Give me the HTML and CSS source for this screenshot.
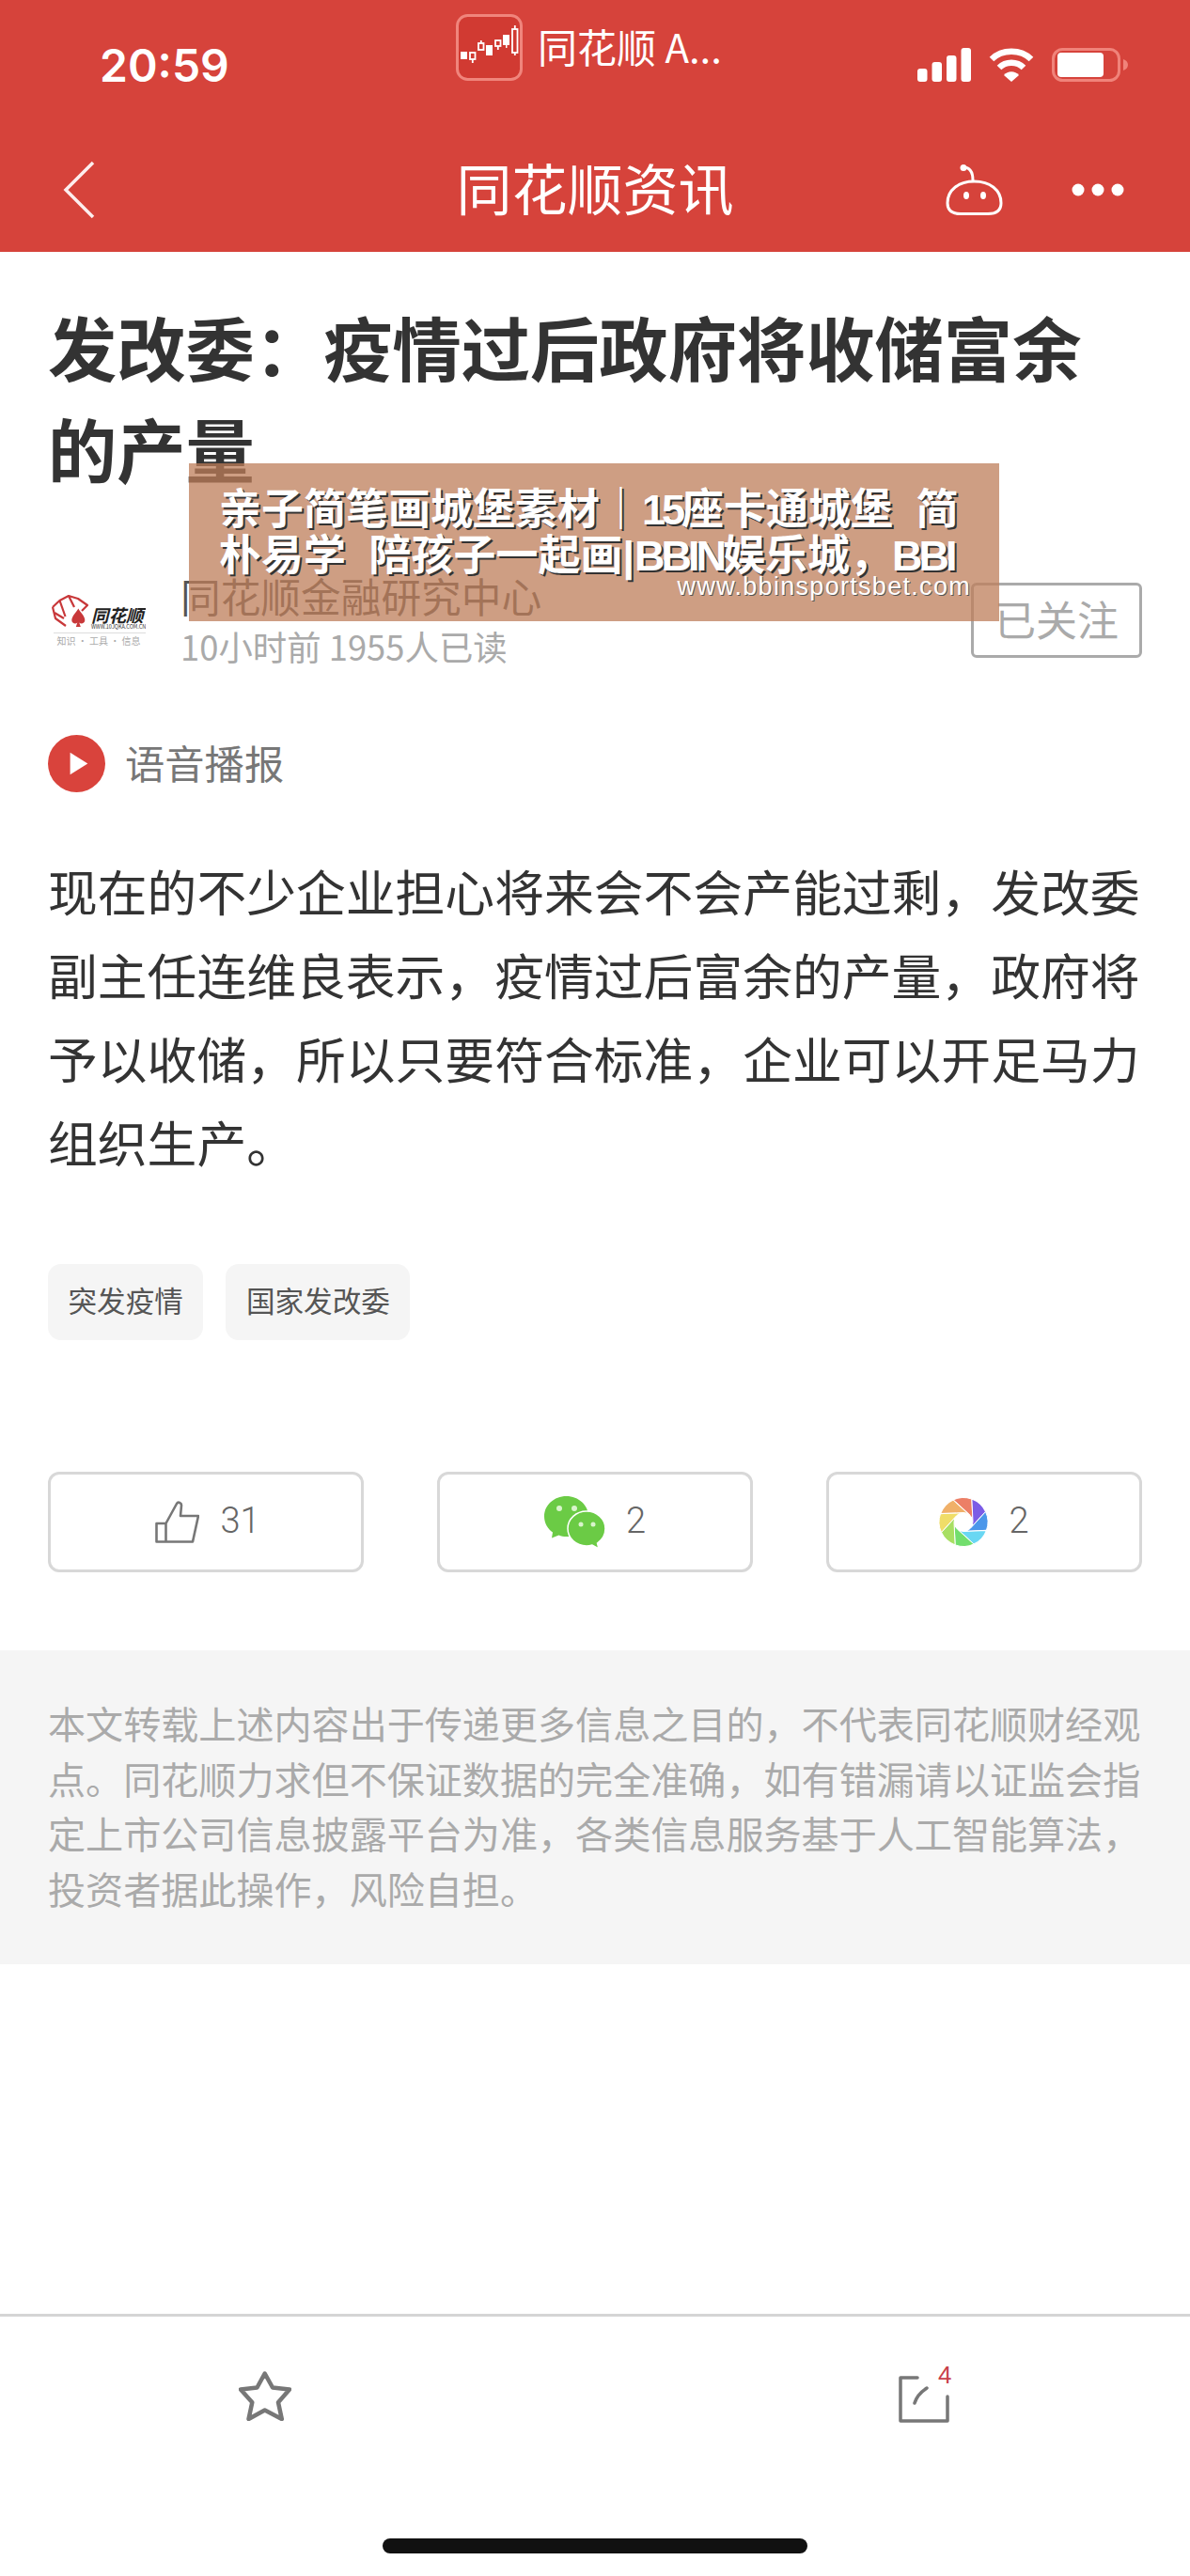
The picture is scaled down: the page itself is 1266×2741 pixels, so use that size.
FILE: index.html
```html
<!DOCTYPE html>
<html lang="zh">
<head>
<meta charset="utf-8">
<title>同花顺资讯</title>
<link rel="stylesheet" href="styles.css">
</head>
<body>
<div class="page">
  <header class="header">
    <div class="status">
      <span class="time">20:59</span>
      <div class="app-pill">
        <svg class="app-icon" viewBox="0 0 71 71">
          <rect x="1.500" y="1.500" width="68" height="68" rx="11" fill="#d13a32" stroke="#f0857c" stroke-width="3"/>
          <g fill="#fff">
            <rect x="5" y="40" width="7" height="8"/>
            <rect x="32" y="33" width="7" height="11"/>
            <rect x="50" y="22" width="7" height="11"/><rect x="53" y="33" width="1.500" height="3"/>
          </g>
          <g fill="none" stroke="#fff" stroke-width="1.800">
            <rect x="15" y="41" width="5.500" height="7"/><path d="M17.800 48v4"/>
            <rect x="24" y="31" width="5.500" height="7"/><path d="M26.800 31v-3"/>
            <rect x="42" y="28" width="5.500" height="6"/><path d="M44.800 34v4"/>
            <rect x="60" y="16" width="5.500" height="25"/><path d="M62.800 16v-4M62.800 41v3"/>
          </g>
        </svg>
        <span class="app-name">同花顺 A...</span>
      </div>
      <div class="status-icons">
        <svg class="signal" viewBox="0 0 57 36"><g fill="#fff"><rect x="0" y="22" width="10.500" height="14" rx="3"/><rect x="15.500" y="15" width="10.500" height="21" rx="3"/><rect x="31" y="8" width="10.500" height="28" rx="3"/><rect x="46.500" y="0" width="10.500" height="36" rx="3"/></g></svg>
        <svg class="wifi" viewBox="0 0 48 36"><g fill="none" stroke="#fff" stroke-width="6.500"><path d="M3 12C14 1 34 1 45 12"/><path d="M11 21c7-7 19-7 26 0"/></g><path d="M16 29c4-5 12-5 16 0l-8 7z" fill="#fff"/></svg>
        <svg class="battery" viewBox="0 0 81 36"><rect x="1.500" y="1.500" width="70" height="33" rx="10" fill="none" stroke="#f0837a" stroke-width="3"/><rect x="6" y="5" width="49" height="26" rx="4" fill="#fff"/><path d="M76 12c3 1 5 3 5 6s-2 5-5 6z" fill="#f0837a"/></svg>
      </div>
    </div>
    <nav class="navbar">
      <svg class="back" viewBox="0 0 36 62"><path d="M33 2 4 31l29 29" fill="none" stroke="#fdeeee" stroke-width="3.500"/></svg>
      <h1 class="nav-title">同花顺资讯</h1>
      <div class="nav-actions">
        <svg class="robot" viewBox="0 0 61 54"><circle cx="19" cy="3.500" r="3.500" fill="#fff"/><path d="M19 3c7 0 10 5 10 14" fill="none" stroke="#fff" stroke-width="3"/><path d="M2 41C2 27 14 18 30.500 18S59 27 59 41c0 9-6 11.500-14 11.500H16C8 52.500 2 50 2 41z" fill="none" stroke="#fff" stroke-width="3"/><ellipse cx="22" cy="33" rx="3" ry="4" fill="#fff"/><ellipse cx="40" cy="33" rx="3" ry="4" fill="#fff"/></svg>
        <svg class="dots" viewBox="0 0 56 14"><circle cx="7" cy="7" r="6.500" fill="#fff"/><circle cx="28" cy="7" r="6.500" fill="#fff"/><circle cx="49" cy="7" r="6.500" fill="#fff"/></svg>
      </div>
    </nav>
  </header>

  <main class="article">
    <h2 class="headline">发改委：疫情过后政府将收储富余的产量</h2>
    <div class="author">
      <svg class="logo" viewBox="0 0 104 82">
        <g fill="none" stroke="#c8383a" stroke-width="2.200" stroke-linejoin="round"><path d="M5 27 12.500 20 22 15l10 3 10 7-6 6"/><path d="M5 27l3 12 11 8"/><path d="M12.500 20l6 17"/><path d="M22 15l6 12"/><path d="M7 33l10 6"/></g>
        <path d="M32.300 28.500c2 4 7 8 7 12.500 0 3-4 4.500-6 2.500l1.500 4.500h-5l1.500-4.500c-2 2-6 .5-6-2.500 0-4.500 5-8.500 7-12.500z" fill="#c8383a"/>
        <text x="46" y="42.500" class="logo-name">同花顺</text>
        <text x="46" y="50" class="logo-url">WWW.10JQKA.COM.CN</text>
        <rect x="6" y="54" width="98" height="1" fill="#ddd"/>
        <text x="54" y="67" class="logo-sub">知识 · 工具 · 信息</text>
      </svg>
      <div class="author-text">
        <div class="author-name">同花顺金融研究中心</div>
        <div class="author-meta">10小时前 1955人已读</div>
      </div>
      <div class="follow">已关注</div>
    </div>
    <div class="ad-banner">
      <div class="ad-title">亲子简笔画城堡素材｜<span class="ad-latin">15</span>座卡通城堡 简朴易学 陪孩子一起画|<span class="ad-latin">BBIN</span>娱乐城，<span class="ad-latin">BBI</span></div>
      <div class="ad-url">www.bbinsportsbet.com</div>
    </div>
    <div class="audio">
      <svg class="audio-icon" viewBox="0 0 62 62"><circle cx="31" cy="31" r="31" fill="#d9433c"/><path d="M24 19l19 12-19 12z" fill="#fff"/></svg>
      <span class="audio-label">语音播报</span>
    </div>
    <p class="body-text">现在的不少企业担心将来会不会产能过剩，发改委副主任连维良表示，疫情过后富余的产量，政府将予以收储，所以只要符合标准，企业可以开足马力组织生产。</p>
    <div class="tags">
      <span class="tag">突发疫情</span>
      <span class="tag">国家发改委</span>
    </div>
    <div class="actions">
      <div class="action">
        <svg class="thumb" viewBox="0 0 47 45"><path d="M11.500 24H1.500v19.500H40L46 16H27l1-11c.3-3-3.500-4.500-5-2L11.500 24v19.500" fill="none" stroke="#777" stroke-width="2.600" stroke-linejoin="round"/></svg>
        <span>31</span>
      </div>
      <div class="action">
        <svg class="wechat" viewBox="0 0 65 56"><path d="M23.500 0C10.500 0 0 9.600 0 21.500 0 28.500 3.600 34.500 9 38.500L8 44.500 15.500 41.500C18 42.500 20.500 43 23.500 43 36.500 43 47 33.400 47 21.500S36.500 0 23.500 0z" fill="#6bcb45"/><path d="M45 16c-11 0-20 8.100-20 18.500S34 53 45 53c2 0 4-.3 6-1l7 4-1.500-6C61.500 46.500 65 41 65 34.500 65 24.100 56 16 45 16z" fill="#6bcb45" stroke="#fff" stroke-width="1.500"/><g fill="#d9f4cc"><circle cx="16" cy="13" r="3"/><circle cx="32" cy="13" r="3"/><circle cx="39" cy="30" r="2.500"/><circle cx="52" cy="30" r="2.500"/></g></svg>
        <span>2</span>
      </div>
      <div class="action">
        <svg class="aperture" viewBox="0 0 52 53">
          <defs><path id="blade" d="M-10.990-23.560A26 26 0 0 1 8.890-24.430L9.990-.52A10 10 0 0 0 6.690-7.430Z" stroke="#fff" stroke-width="1"/></defs>
          <g transform="translate(26 26.500)">
            <use href="#blade" fill="#ec7f66"/>
            <use href="#blade" fill="#7b5ce6" transform="rotate(45)"/>
            <use href="#blade" fill="#4b97ea" transform="rotate(90)"/>
            <use href="#blade" fill="#69d7f3" transform="rotate(135)"/>
            <use href="#blade" fill="#72de6d" transform="rotate(180)"/>
            <use href="#blade" fill="#a8df62" transform="rotate(225)"/>
            <use href="#blade" fill="#f0dd68" transform="rotate(270)"/>
            <use href="#blade" fill="#f0b069" transform="rotate(315)"/>
          </g>
        </svg>
        <span>2</span>
      </div>
    </div>
  </main>

  <section class="disclaimer">本文转载上述内容出于传递更多信息之目的，不代表同花顺财经观点。同花顺力求但不保证数据的完全准确，如有错漏请以证监会指定上市公司信息披露平台为准，各类信息服务基于人工智能算法，投资者据此操作，风险自担。</section>

  <div class="spacer"></div>

  <footer class="toolbar">
    <div class="tools">
      <svg class="star" viewBox="-1 -1 56 53"><path d="M26.700 1.500 35 16.500l18 2-12 13.800 3.800 17.700-18.100-9.500L9.500 50l3.800-17.700L1 18.500l17.500-2z" fill="none" stroke="#777" stroke-width="4.500" stroke-linejoin="round"/></svg>
      <div class="share">
        <svg class="share-icon" viewBox="0 0 54 50"><path d="M20 2H2v46h50V22" fill="none" stroke="#777" stroke-width="3.500" stroke-linecap="round" stroke-linejoin="round"/><path d="M17 29c2-7 7-12 13-16" fill="none" stroke="#777" stroke-width="3.500" stroke-linecap="round"/></svg>
        <span class="share-count">4</span>
      </div>
    </div>
    <div class="home-indicator"></div>
  </footer>
</div>
</body>
</html>
```

FILE: styles.css
```css
* { box-sizing: border-box; }
html, body { margin: 0; padding: 0; background: #fff; }
body { font-family: "Noto Sans CJK SC", "Liberation Sans", sans-serif; }
.page { position: relative; width: 1266px; height: 2741px; display: flex; flex-direction: column; overflow: hidden; }

.header { height: 268px; background: #d6433b; color: #fff; flex: none; }
.status { height: 136px; display: flex; align-items: flex-start; padding: 15px 66px 0 106px; }
.time { font-family: Inter, "Liberation Sans", sans-serif; font-weight: 600; font-size: 48px; line-height: 72px; margin-top: 19px; width: 379px; }
.app-pill { display: flex; align-items: center; height: 71px; }
.app-icon { width: 71px; height: 71px; display: block; margin-right: 16px; }
.app-name { font-size: 42px; line-height: 70px; margin-top: -4px; }
.status-icons { margin-left: auto; margin-top: 36px; display: flex; align-items: center; gap: 19px; }
.signal { width: 57px; height: 36px; display: block; }
.wifi { width: 48px; height: 36px; display: block; }
.battery { width: 81px; height: 36px; display: block; }

.navbar { height: 132px; display: grid; grid-template-columns: 1fr auto 1fr; align-items: center; padding: 0 70px 0 66px; }
.back { width: 36px; height: 62px; display: block; }
.nav-title { margin: -6px 0 0 4px; font-size: 59px; font-weight: 400; line-height: 80px; }
.nav-actions { display: flex; align-items: center; justify-content: flex-end; gap: 73px; }
.robot { width: 61px; height: 54px; display: block; }
.dots { width: 56px; height: 14px; display: block; }

.article { padding: 46px 51px 0; position: relative; flex: none; }
.headline { margin: 0; font-size: 73.300px; line-height: 108px; font-weight: 700; color: #333; }
.author { display: flex; align-items: center; height: 108px; margin-top: 76px; }
.logo { width: 104px; height: 82px; display: block; margin-right: 37px; flex: none; }
.logo-name { font-size: 18.500px; font-weight: 700; font-style: italic; fill: #222; }
.logo-url { font-size: 5.500px; fill: #333; }
.logo-sub { font-size: 10px; fill: #aaa; text-anchor: middle; }
.author-text { flex: 1; }
.author-name { font-size: 42.700px; line-height: 54px; color: #555; }
.author-meta { font-size: 36.400px; line-height: 54px; color: #aaa; }
.follow { width: 182px; height: 80px; border: 3px solid #aaa; border-radius: 6px; color: #aaa; font-size: 44px; line-height: 70px; text-align: center; }

.ad-banner { position: absolute; left: 201px; top: 225px; width: 862px; height: 168px; background: rgba(190, 125, 90, 0.75); padding: 25px 30px 0 32px; color: #fff; }
.ad-title { font-family: "Liberation Sans", "Noto Sans CJK SC", sans-serif; font-size: 45px; line-height: 49px; font-weight: 700; text-shadow: 2px 2px 0 #333; word-spacing: 12px; }
.ad-latin { letter-spacing: -4px; }
.ad-url { font-family: "Liberation Sans", sans-serif; font-size: 27px; line-height: 32px; margin-top: -8px; text-align: right; letter-spacing: 1.300px; text-shadow: 1px 1px 0 #555; }

.audio { display: flex; align-items: center; height: 61px; margin-top: 68px; gap: 21px; font-size: 42.300px; color: #777; }
.audio-icon { width: 61px; height: 61px; display: block; }
.audio-label { margin-top: -5px; }

.body-text { margin: 60px 0 0; font-size: 52.800px; line-height: 89px; color: #333; }

.tags { display: flex; gap: 24px; margin-top: 86px; }
.tag { height: 81px; padding: 0 21.500px; background: #f5f5f5; border-radius: 14px; font-size: 30.600px; line-height: 76px; color: #555; }

.actions { display: flex; justify-content: space-between; margin-top: 140px; }
.action { width: 336px; height: 107px; border: 3px solid #d8d8d8; border-radius: 12px; display: flex; align-items: center; justify-content: center; gap: 22px; font-family: Roboto, "Liberation Sans", sans-serif; font-weight: 300; font-size: 38px; line-height: 46px; color: #666; }
.action span { margin-top: -3px; }
.thumb { width: 47px; height: 45px; display: block; margin-left: 4px; }
.wechat { width: 65px; height: 56px; display: block; }
.aperture { width: 52px; height: 53px; display: block; }

.disclaimer { margin-top: 83px; height: 334px; flex: none; padding: 48px 51px 0; background: #f5f5f5; color: #aaa; font-size: 40.100px; line-height: 58.500px; }

.spacer { flex: 1; }

.toolbar { height: 279px; flex: none; border-top: 3px solid #d5d5d5; display: flex; flex-direction: column; }
.tools { display: flex; justify-content: space-between; align-items: flex-start; padding: 58px 256px 0 254px; }
.star { width: 56px; height: 53px; display: block; }
.share { position: relative; margin-top: 5px; }
.share-icon { width: 54px; height: 50px; display: block; }
.share-count { position: absolute; left: 42px; top: -16px; color: #c9404a; font-size: 26px; font-family: "Liberation Sans", sans-serif; line-height: 30px; }
.home-indicator { width: 452px; height: 16px; border-radius: 8px; background: #111; margin: 123px auto 0; }
```
